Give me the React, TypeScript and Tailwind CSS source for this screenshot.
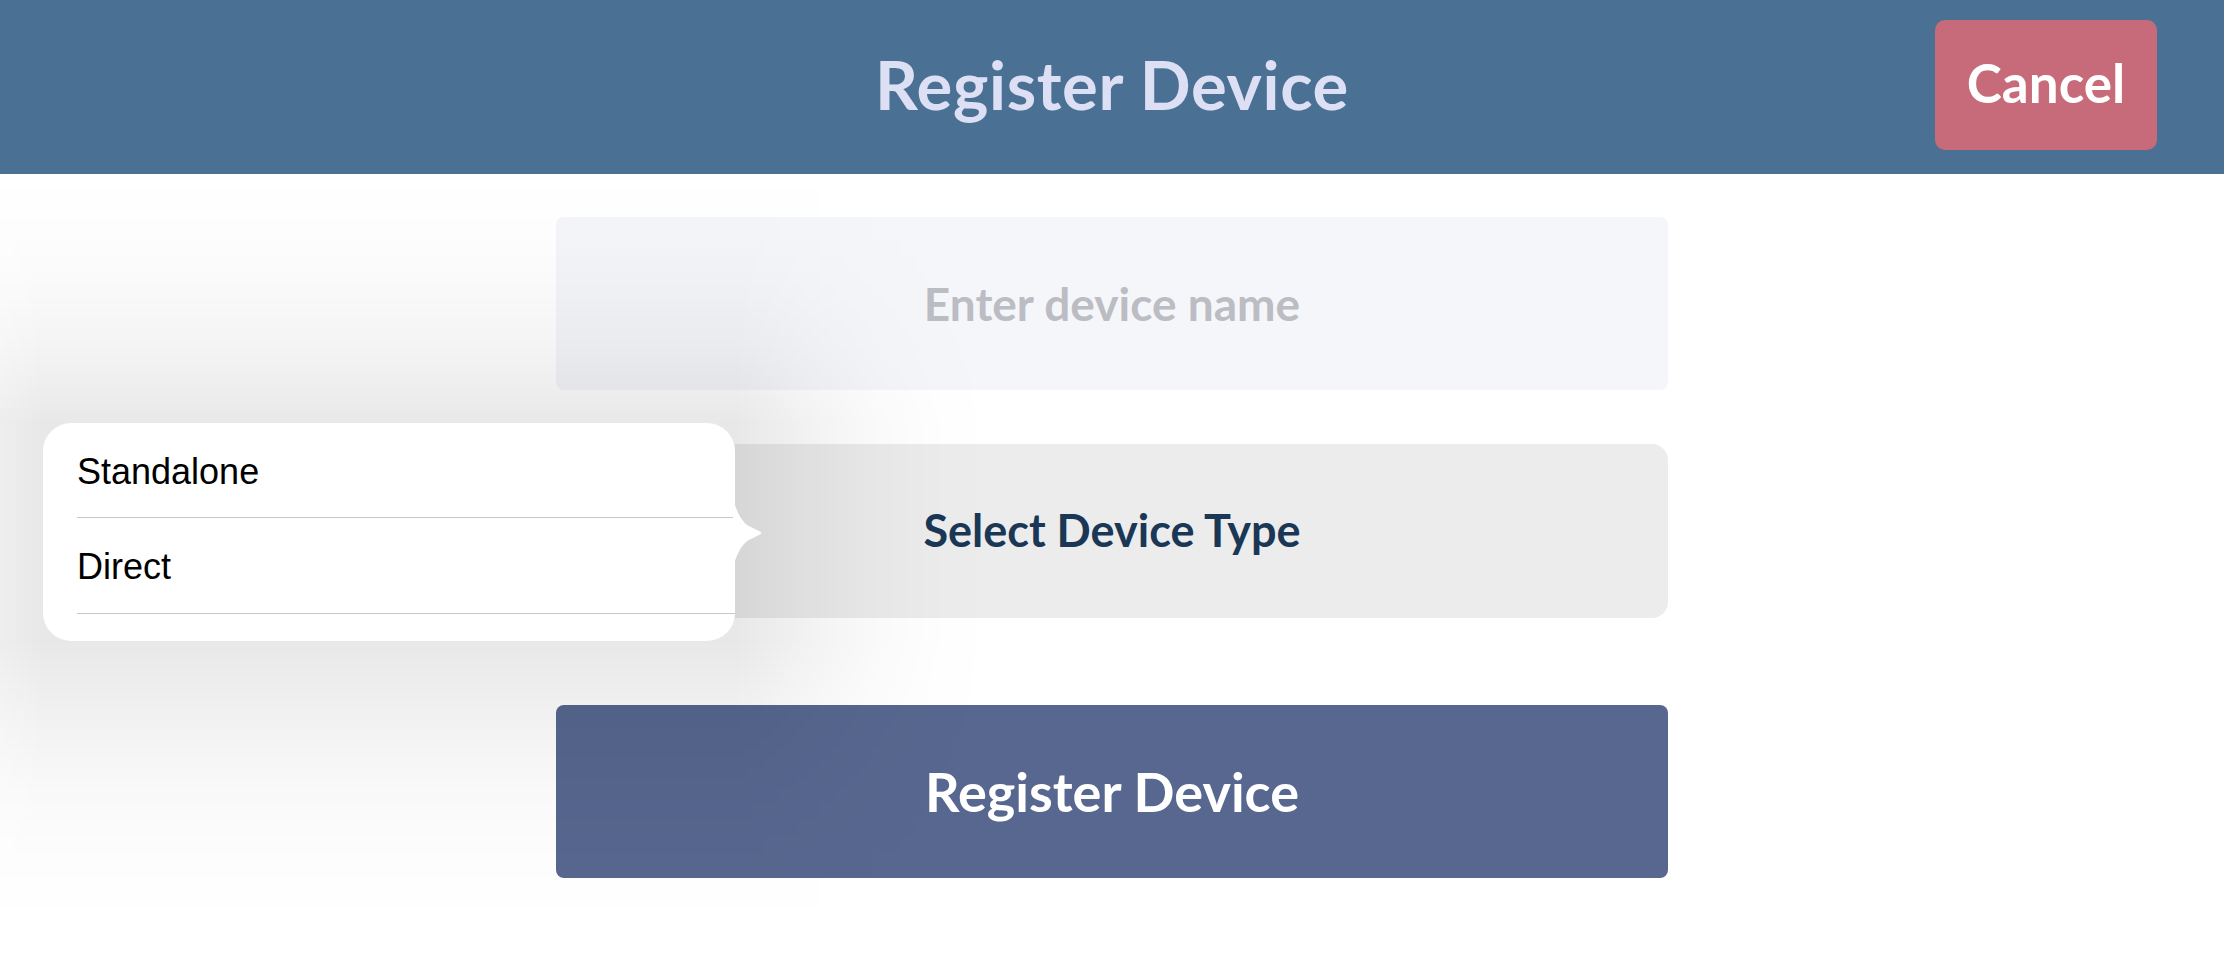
import React from "react";

const sans = "font-['Lato','Open_Sans',sans-serif]";

// soft shade the popover casts over the page; drawn as gradients so it stays smooth
function PopoverShade() {
  return (
    <div className="pointer-events-none absolute left-[-217px] top-[173px] h-[748px] w-[1212px] bg-[linear-gradient(to_bottom,rgba(0,0,0,0)_0px,rgba(0,0,0,0.006)_60px,rgba(0,0,0,0.022)_120px,rgba(0,0,0,0.048)_180px,rgba(0,0,0,0.072)_220px,rgba(0,0,0,0.09)_250px,rgba(0,0,0,0.09)_468px,rgba(0,0,0,0.075)_500px,rgba(0,0,0,0.05)_550px,rgba(0,0,0,0.025)_620px,rgba(0,0,0,0.008)_690px,rgba(0,0,0,0)_748px)] [mask-image:linear-gradient(to_right,transparent_0px,rgba(0,0,0,0.07)_60px,rgba(0,0,0,0.24)_120px,rgba(0,0,0,0.52)_180px,rgba(0,0,0,0.8)_225px,black_260px,black_952px,rgba(0,0,0,0.8)_987px,rgba(0,0,0,0.52)_1032px,rgba(0,0,0,0.24)_1092px,rgba(0,0,0,0.07)_1152px,transparent_1212px)]" />
  );
}

function Popover() {
  return (
    <div className="absolute left-[43px] top-[423px] z-10 w-[692px]">
      <div className="relative h-[218px] rounded-[28px] bg-white">
        <svg
          className="absolute right-[-30px] top-[77px]"
          width="32"
          height="66"
          viewBox="0 0 32 66"
        >
          <path
            d="M0 0 C4 10 6 18 14 25 L26 31 C29 32 29 34 26 35 L14 41 C6 48 4 56 0 66 Z"
            fill="#ffffff"
          />
        </svg>
        <ul className="pl-[34px] font-['Liberation_Sans',Arial,sans-serif] text-[36px] text-black">
          <li className="flex h-[95px] items-center border-b border-[#c8c8c8] pt-[3px]">Standalone</li>
          <li className="flex h-[96px] items-center border-b border-[#c8c8c8] pt-[3px]">Direct</li>
        </ul>
      </div>
    </div>
  );
}

export default function App() {
  return (
    <div className={`relative h-[965px] w-[2224px] overflow-hidden bg-white ${sans}`}>
      <header className="grid h-[174px] grid-cols-[1fr_auto_1fr] bg-[#4a7094]">
        <div />
        <h1 className="self-center pb-[6px] text-[67px] font-bold tracking-[0.01em] text-[#dde0f5]">
          Register Device
        </h1>
        <div className="flex items-start justify-end pr-[67px] pt-[20px]">
          <button className="flex h-[130px] w-[222px] items-center justify-center rounded-[10px] bg-[#c76a7a] pb-[4px] text-[53px] font-bold text-white">
            Cancel
          </button>
        </div>
      </header>

      <main className="flex flex-col items-center pt-[43px]">
        <div className="flex h-[173px] w-[1112px] items-center justify-center rounded-[8px] bg-[#f5f6fa] text-[46px] font-bold text-[#bcbdc3]">
          Enter device name
        </div>
        <div className="mt-[54px] flex h-[174px] w-[1112px] items-center justify-center rounded-[16px] bg-[#ececec] text-[45px] font-bold text-[#1a3756]">
          Select Device Type
        </div>
        <button className="mt-[87px] flex h-[173px] w-[1112px] items-center justify-center rounded-[8px] bg-[#57678f] text-[54px] font-bold text-white">
          Register Device
        </button>
      </main>

      <PopoverShade />
      <Popover />
    </div>
  );
}
